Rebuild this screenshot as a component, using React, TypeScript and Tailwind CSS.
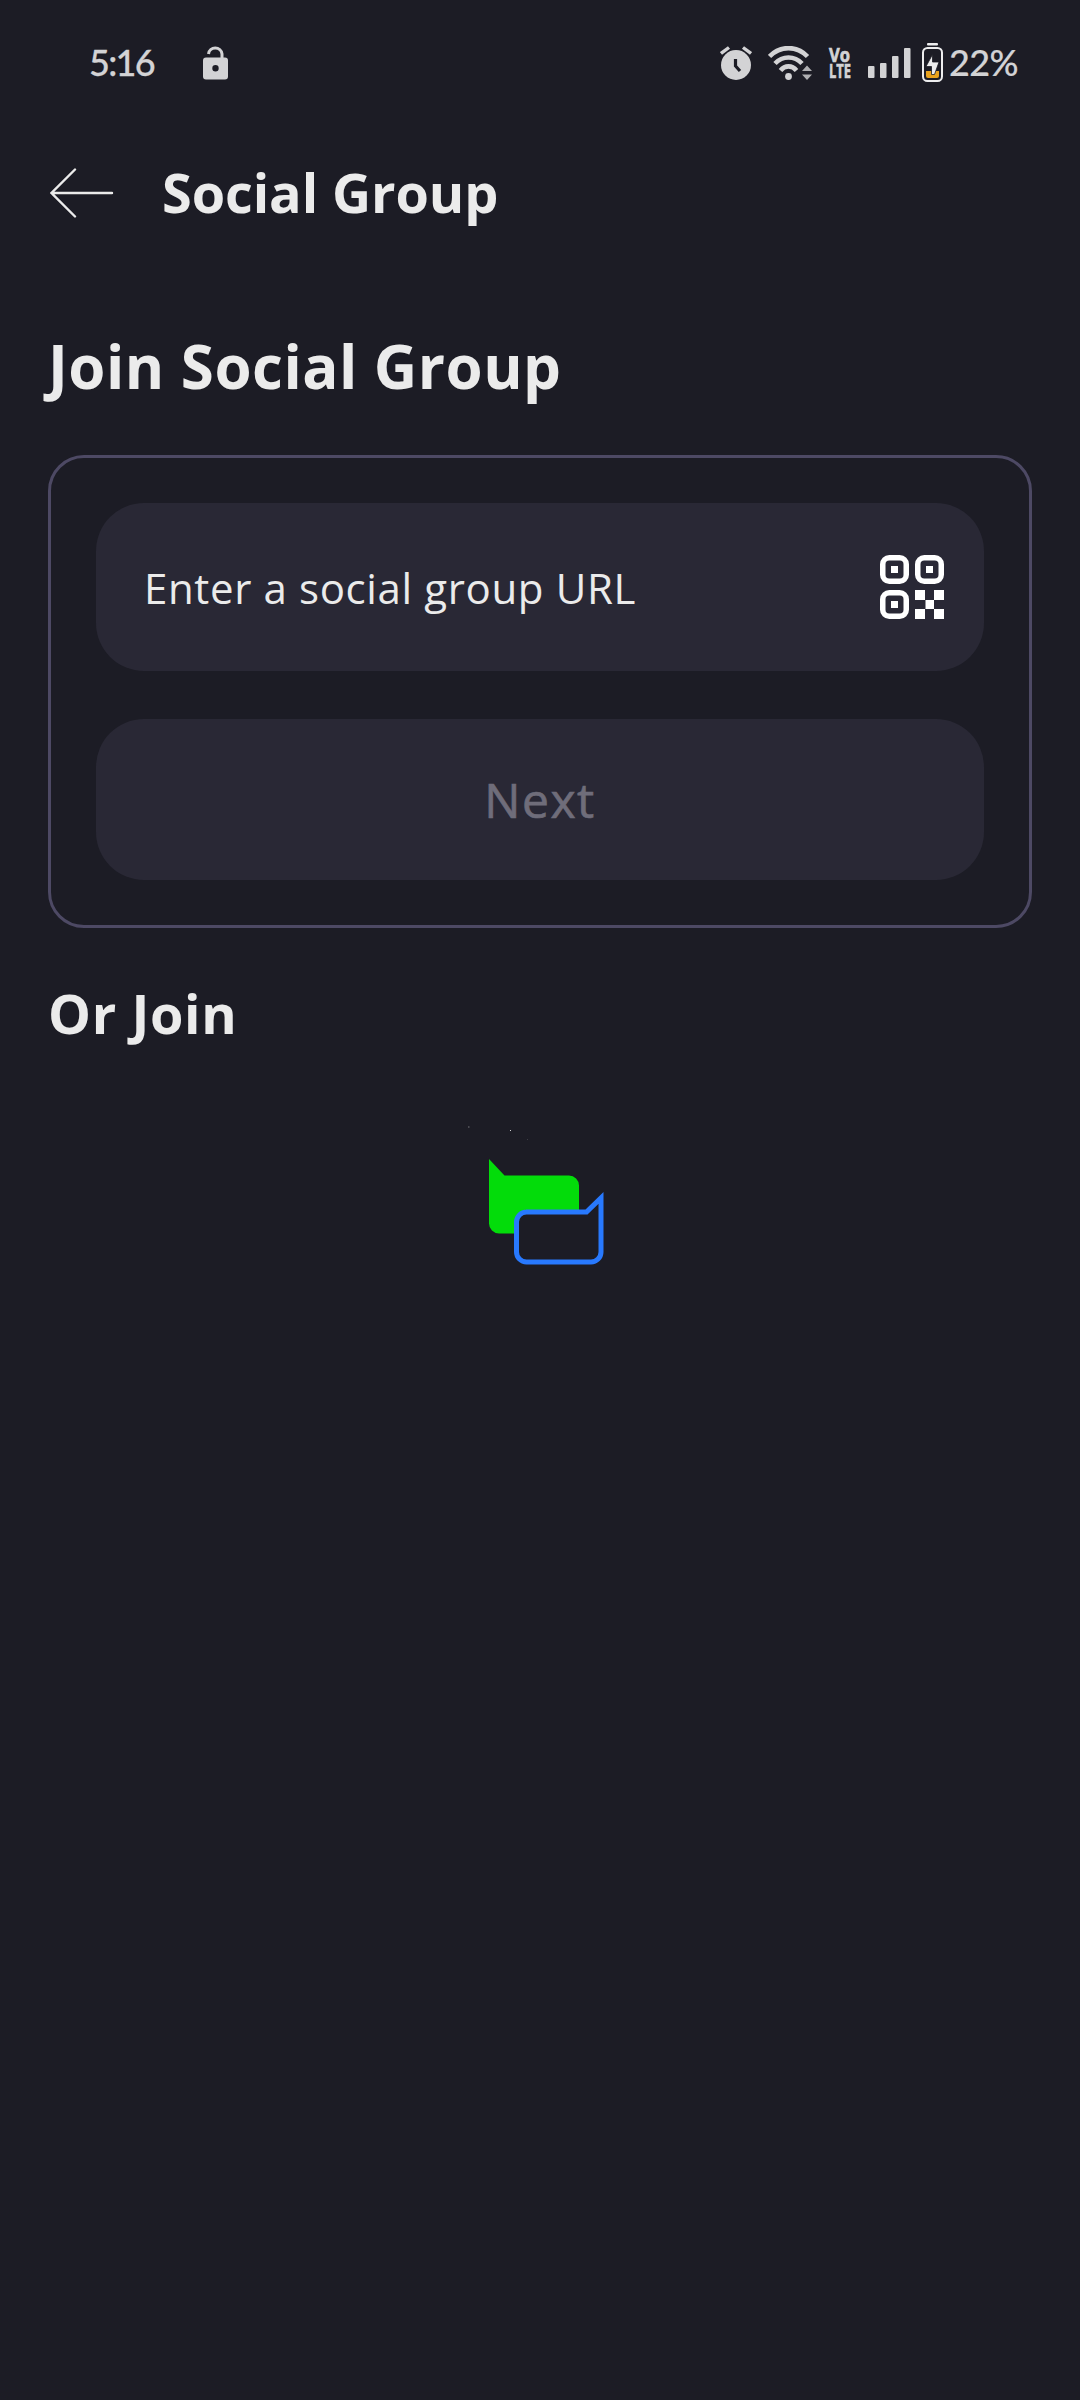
function StatusBar() {
  return (
    <div className="flex h-[126px] items-center pl-[89px] pr-[61px] font-['Lato',sans-serif] text-[#d3d3d5]">
      <span className="relative -top-px w-[114px] text-[36px] leading-none font-medium tracking-[-1.7px] [-webkit-text-stroke:0.3px_currentColor]">5:16</span>
      <svg width="25" height="34" viewBox="0 0 25 34" fill="currentColor">
        <path d="M5.500 8A6.800 6.800 0 0 1 19 8v4" fill="none" stroke="currentColor" strokeWidth="3" />
        <path fillRule="evenodd" d="M3 11.500h19a3 3 0 0 1 3 3V30.500a3 3 0 0 1-3 3H3a3 3 0 0 1-3-3V14.500a3 3 0 0 1 3-3ZM12.500 19a3.200 3.200 0 1 0 0 6.400a3.200 3.200 0 0 0 0-6.400Z" />
      </svg>
      <div className="ml-auto flex items-center">
        <svg width="32" height="34" viewBox="0 0 32 34" className="mr-4">
          <path d="M1 7.500 9 1.500M31 7.500 23 1.500" stroke="currentColor" strokeWidth="3.400" />
          <circle cx="16" cy="19" r="15" fill="currentColor" />
          <path d="M15.500 13v7l4.500 5" fill="none" stroke="#1c1c25" strokeWidth="3.200" />
        </svg>
        <svg width="46" height="34" viewBox="0 0 46 34" className="mr-[15px]">
          <g fill="none" stroke="currentColor" strokeWidth="4.600">
            <path d="M1.500 10.500C12-.7 29-.7 39.500 10.500" />
            <path d="M7 17.500C14.500 9.500 26.500 9.500 34 17.500" />
            <path d="M12.500 24.500C17 19 24 19 28.500 24.500" />
          </g>
          <circle cx="20.500" cy="30.500" r="3.400" fill="currentColor" />
          <path d="M34 25 39 19.500 44 25ZM34 28.500H44L39 34Z" fill="currentColor" opacity=".8" />
        </svg>
        <svg width="22" height="32" viewBox="0 0 22 32" fill="currentColor" stroke="currentColor" strokeWidth=".7" className="mr-[17px] overflow-visible font-['Open_Sans',sans-serif] text-[19.500px] font-bold">
          <text x="0" y="14.500" textLength="21" lengthAdjust="spacingAndGlyphs">Vo</text>
          <text x="0" y="30.500" textLength="22" lengthAdjust="spacingAndGlyphs">LTE</text>
        </svg>
        <svg width="43" height="30" viewBox="0 0 43 30" fill="currentColor" className="mr-[11px]">
          <rect x="0" y="18" width="6.500" height="12" rx="1" />
          <rect x="12" y="15" width="6.500" height="15" rx="1" />
          <rect x="24" y="8" width="6.500" height="22" rx="1" />
          <rect x="36" y="0" width="6.500" height="30" rx="1" />
        </svg>
        <svg width="21" height="39" viewBox="0 0 21 39" className="relative -top-px mr-1.5">
          <rect x="5" y="0" width="11" height="2.500" rx="1" fill="#ededee" />
          <rect x="1" y="5" width="19" height="33" rx="4.500" fill="none" stroke="#ededee" strokeWidth="2" />
          <path d="M4 28h13v5a2 2 0 0 1-2 2H6a2 2 0 0 1-2-2Z" fill="#e9a21d" />
          <path d="M10.500 11.500V19H17L12.500 31.500H9.500V23.500H4Z" fill="#ededee" stroke="#1c1c25" strokeWidth=".8" />
        </svg>
        <span className="relative -top-px w-[70px] text-[36px] leading-none font-medium tracking-[-0.6px] [-webkit-text-stroke:0.2px_currentColor]">22%</span>
      </div>
    </div>
  );
}

function Header() {
  return (
    <header className="flex h-[132px] items-center pl-[50px]">
      <svg width="64" height="50" viewBox="0 0 64 50" fill="none" stroke="#ebebeb" strokeWidth="2.400" strokeLinecap="round" className="mt-[2px] mr-12">
        <path d="M25 1.500 1.500 25 25 48.500M1.500 25H62" />
      </svg>
      <h1 className="text-[54px] leading-[74px] font-bold tracking-[-0.08px]">Social Group</h1>
    </header>
  );
}

function QrIcon() {
  return (
    <svg width="64" height="64" viewBox="0 0 64 64">
      <g fill="none" stroke="#fff" strokeWidth="5.500">
        <rect x="2.750" y="2.750" width="23.500" height="23.500" rx="6.500" />
        <rect x="37.750" y="2.750" width="23.500" height="23.500" rx="6.500" />
        <rect x="2.750" y="37.750" width="23.500" height="23.500" rx="6.500" />
      </g>
      <path fill="#fff" d="M11 11h7v7h-7ZM46 11h7v7h-7ZM11 46h7v7h-7ZM35 35h10v10H35ZM54 35h10v10H54ZM45.500 45h8.500v9h-8.500ZM35 54h10v10H35ZM54 54h10v10H54Z" />
    </svg>
  );
}

function ChatLogo() {
  return (
    <svg width="144" height="144" viewBox="460 1122 144 144" className="ml-[460px]">
      <path d="M489 1159 504.500 1175.500H569a10 10 0 0 1 10 10V1233.500H499a10 10 0 0 1-10-10Z" fill="#03dc0a" />
      <path d="M526 1212H586.500L601 1198V1252a10 10 0 0 1-10 10H526.500a10 10 0 0 1-10-10V1222a10 10 0 0 1 10-10Z" fill="#1c1c25" stroke="#2879fe" strokeWidth="5" />
      <g fill="#fff">
        <rect x="468" y="1126" width="1.500" height="2" opacity=".2" />
        <rect x="510" y="1130" width="1" height="1" opacity=".8" />
        <rect x="527" y="1139" width="1" height="1" opacity=".15" />
      </g>
    </svg>
  );
}

export default function App() {
  return (
    <div className="flex h-[2400px] w-[1080px] flex-col bg-[#1c1c25] font-['Open_Sans',sans-serif] text-[#ebebeb]">
      <StatusBar />
      <Header />
      <main className="flex flex-col">
        <h2 className="mt-[67px] ml-12 text-[60px] leading-[82px] font-bold tracking-[0.5px]">Join Social Group</h2>
        <section className="mx-12 mt-12 flex h-[473px] flex-col gap-12 rounded-[36px] border-3 border-[#4d4964] p-[45px]">
          <div className="flex h-[168px] items-center justify-between rounded-[48px] bg-[#292835] pr-10 pl-12">
            <span className="text-[42px] tracking-[0.63px]">Enter a social group URL</span>
            <QrIcon />
          </div>
          <button className="h-[161px] rounded-[48px] bg-[#292835] text-[48px] font-medium tracking-[1.5px] text-[#6f6d7a] [-webkit-text-stroke:0.7px_currentColor]">Next</button>
        </section>
        <h3 className="mt-12 mb-[72px] ml-12 text-[54px] leading-[74px] font-bold tracking-[0.65px]">Or Join</h3>
        <ChatLogo />
      </main>
    </div>
  );
}
